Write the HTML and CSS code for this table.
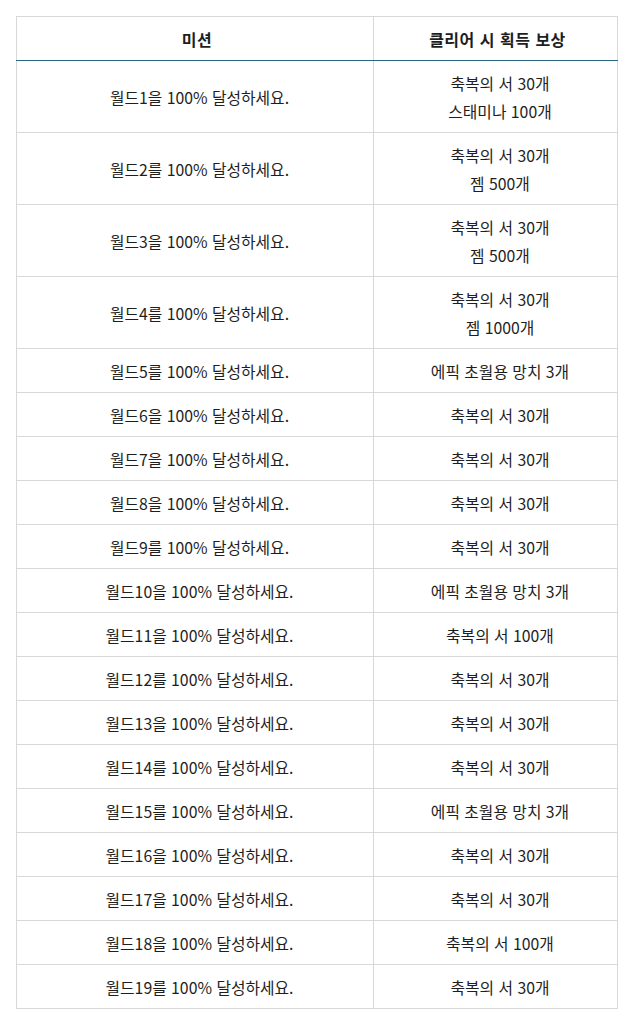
FILE: index.html
```html
<!DOCTYPE html>
<html lang="ko">
<head>
<meta charset="utf-8">
<link rel="stylesheet" href="styles.css">
</head>
<body>
<table class="mission-table">
  <thead>
    <tr><th class="col-mission">미션</th><th class="col-reward">클리어 시 획득 보상</th></tr>
  </thead>
  <tbody>
    <tr><td>월드1을 100% 달성하세요.</td><td>축복의 서 30개<br>스태미나 100개</td></tr>
    <tr><td>월드2를 100% 달성하세요.</td><td>축복의 서 30개<br>젬 500개</td></tr>
    <tr><td>월드3을 100% 달성하세요.</td><td>축복의 서 30개<br>젬 500개</td></tr>
    <tr><td>월드4를 100% 달성하세요.</td><td>축복의 서 30개<br>젬 1000개</td></tr>
    <tr><td>월드5를 100% 달성하세요.</td><td>에픽 초월용 망치 3개</td></tr>
    <tr><td>월드6을 100% 달성하세요.</td><td>축복의 서 30개</td></tr>
    <tr><td>월드7을 100% 달성하세요.</td><td>축복의 서 30개</td></tr>
    <tr><td>월드8을 100% 달성하세요.</td><td>축복의 서 30개</td></tr>
    <tr><td>월드9를 100% 달성하세요.</td><td>축복의 서 30개</td></tr>
    <tr><td>월드10을 100% 달성하세요.</td><td>에픽 초월용 망치 3개</td></tr>
    <tr><td>월드11을 100% 달성하세요.</td><td>축복의 서 100개</td></tr>
    <tr><td>월드12를 100% 달성하세요.</td><td>축복의 서 30개</td></tr>
    <tr><td>월드13을 100% 달성하세요.</td><td>축복의 서 30개</td></tr>
    <tr><td>월드14를 100% 달성하세요.</td><td>축복의 서 30개</td></tr>
    <tr><td>월드15를 100% 달성하세요.</td><td>에픽 초월용 망치 3개</td></tr>
    <tr><td>월드16을 100% 달성하세요.</td><td>축복의 서 30개</td></tr>
    <tr><td>월드17을 100% 달성하세요.</td><td>축복의 서 30개</td></tr>
    <tr><td>월드18을 100% 달성하세요.</td><td>축복의 서 100개</td></tr>
    <tr><td>월드19를 100% 달성하세요.</td><td>축복의 서 30개</td></tr>
  </tbody>
</table>
</body>
</html>
```

FILE: styles.css
```css
html, body {
  margin: 0;
  padding: 0;
  background: #ffffff;
}
body {
  padding: 16px 12px 16px 16px;
  font-family: "Noto Sans CJK KR", "Noto Sans", sans-serif;
  font-size: 15.8px;
  color: #1e1e1e;
}
.mission-table {
  width: 602px;
  border-collapse: collapse;
  border: 1px solid #d8d8d8;
  table-layout: fixed;
}
.mission-table th,
.mission-table td {
  text-align: center;
  vertical-align: middle;
  border-left: 1px solid #d8d8d8;
  border-right: 1px solid #d8d8d8;
  line-height: 28px;
  padding: 9px 4px 6px 13px;
}
.mission-table th {
  font-weight: bold;
  font-size: 16px;
  letter-spacing: 0.5px;
  color: #1e1e1e;
  border-bottom: 1px solid #2a6883;
  padding-left: 8px;
  padding-top: 8px;
  padding-bottom: 7px;
}
.mission-table td {
  border-top: 1px solid #d8d8d8;
}
.col-mission {
  width: 344px;
}
.col-reward {
  width: auto;
}
```
